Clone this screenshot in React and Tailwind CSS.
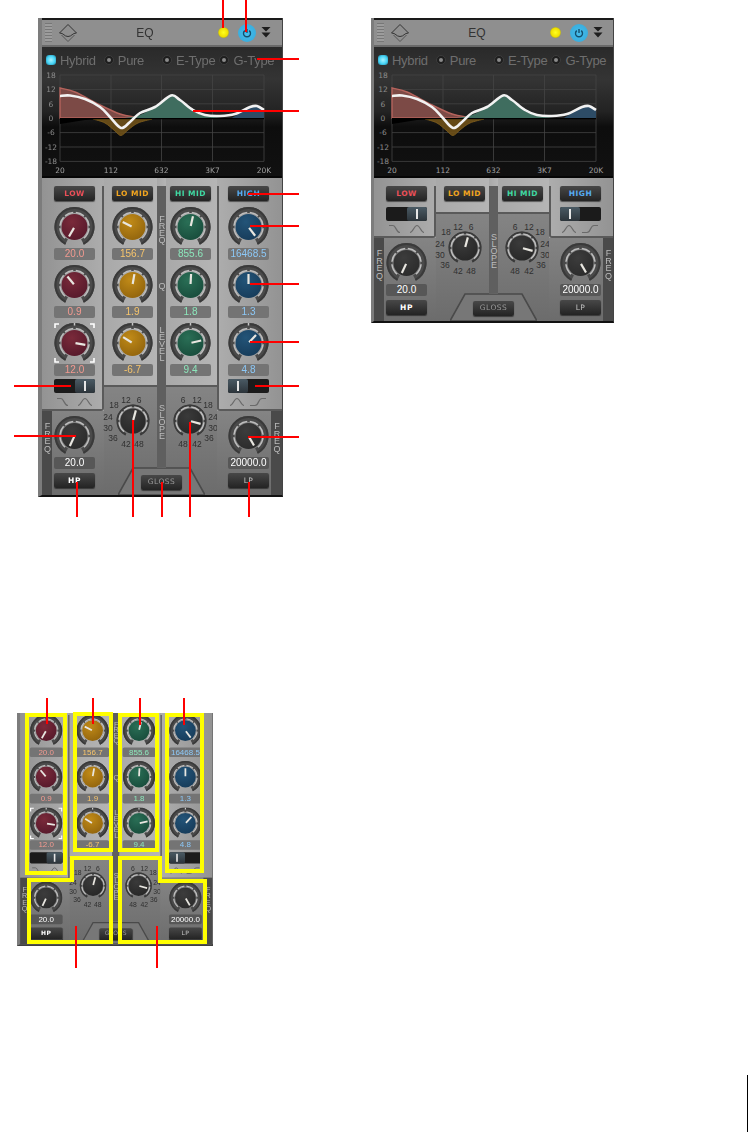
import React, { useId } from "react";

const pts = (list) => {
  let d = `M${list[0][0]} ${list[0][1]}`;
  for (let i = 0; i < list.length - 1; i++) {
    const p0 = list[i - 1] || list[i];
    const p1 = list[i];
    const p2 = list[i + 1];
    const p3 = list[i + 2] || p2;
    const c1 = [p1[0] + (p2[0] - p0[0]) / 6, p1[1] + (p2[1] - p0[1]) / 6];
    const c2 = [p2[0] - (p3[0] - p1[0]) / 6, p2[1] - (p3[1] - p1[1]) / 6];
    d += ` C${c1[0].toFixed(1)} ${c1[1].toFixed(1)} ${c2[0].toFixed(1)} ${c2[1].toFixed(1)} ${p2[0]} ${p2[1]}`;
  }
  return d;
};

const polar = (cx, cy, r, deg) => {
  const a = ((deg - 90) * Math.PI) / 180;
  return [cx + r * Math.cos(a), cy + r * Math.sin(a)];
};
const arc = (cx, cy, r, a, b) => {
  const [x1, y1] = polar(cx, cy, r, a);
  const [x2, y2] = polar(cx, cy, r, b);
  return `M${x1.toFixed(2)} ${y1.toFixed(2)} A${r} ${r} 0 ${b - a > 180 ? 1 : 0} 1 ${x2.toFixed(2)} ${y2.toFixed(2)}`;
};

const RING = [
  [-140, -95],
  [-85, -48],
  [-40, -5],
  [5, 40],
  [48, 85],
  [95, 140],
];

function KnobArt({ cx, cy, outer, band, ringR, capR, cap, capDark, angle, ptrLen, selected, tick }) {
  const id = useId();
  const [x1, y1] = polar(cx, cy, 1, angle);
  const [x2, y2] = polar(cx, cy, ptrLen, angle);
  return (
    <>
      <defs>
        <radialGradient id={id} cx="40%" cy="30%" r="80%">
          <stop offset="0%" stopColor={cap} />
          <stop offset="100%" stopColor={capDark} />
        </radialGradient>
      </defs>
      <path d={arc(cx, cy, outer - band / 2, -152, 152)} fill="none" stroke="#4a4a4a" strokeWidth={band} />
      <path d={arc(cx, cy, outer - 1, -152, 152)} fill="none" stroke="#3a3a3a" strokeWidth="2" />
      {RING.map(([a, b]) => (
        <path key={a} d={arc(cx, cy, ringR, a, b)} fill="none" stroke="#bdbdbd" strokeWidth="1.6" />
      ))}
      <circle cx={cx} cy={cy} r={capR} fill={`url(#${id})`} />
      <line x1={x1} y1={y1} x2={x2} y2={y2} stroke="#e8e6e0" strokeWidth="2.2" />
      {tick && <line x1={cx} y1={0} x2={cx} y2={2.5} stroke="#c8c8c8" strokeWidth="1.5" />}
      {selected && (
        <path
          d="M1 5V1H5M36 1H40V5M40 35V39H36M5 39H1V35"
          fill="none"
          stroke="#ffffff"
          strokeWidth="1.6"
        />
      )}
    </>
  );
}

const CAPS = {
  low: ["#7a2a3a", "#54182a"],
  lomid: ["#c08a18", "#8f620c"],
  himid: ["#2a6f56", "#174a3a"],
  high: ["#235478", "#163a58"],
  dark: ["#3c3c3c", "#2a2a2a"],
};

function Knob({ tone, angle, selected, tick }) {
  const [c, d] = CAPS[tone];
  return (
    <svg width="41" height="40" viewBox="0 0 41 40" className="block">
      <KnobArt
        cx={20.5}
        cy={20}
        outer={20}
        band={6}
        ringR={14.6}
        capR={13}
        cap={c}
        capDark={d}
        angle={angle}
        ptrLen={11}
        selected={selected}
        tick={tick}
      />
    </svg>
  );
}

const LEFT_SCALE = [
  ["12", -7, -21],
  ["6", 6, -21],
  ["18", -19, -16],
  ["24", -25, -4],
  ["30", -25, 7],
  ["36", -20, 17],
  ["42", -7, 23],
  ["48", 6, 23],
];
const RIGHT_SCALE = [
  ["6", -7, -21],
  ["12", 7, -21],
  ["18", 18, -16],
  ["24", 23, -4],
  ["30", 23, 7],
  ["36", 19, 17],
  ["48", -7, 23],
  ["42", 7, 23],
];

function Dial({ scale, angle, className }) {
  return (
    <svg width="60" height="56" viewBox="-30 -28 60 56" className={`block overflow-visible ${className}`}>
      <KnobArt
        cx={0}
        cy={0}
        outer={16.5}
        band={2.5}
        ringR={14}
        capR={12.6}
        cap="#3a3a3a"
        capDark="#262626"
        angle={angle}
        ptrLen={11}
      />
      {scale.map(([t, x, y]) => (
        <text
          key={t}
          x={x}
          y={y + 3}
          textAnchor="middle"
          fontSize="8.5"
          fill="#303030"
          className="font-['Liberation_Sans',sans-serif]"
        >
          {t}
        </text>
      ))}
    </svg>
  );
}

function Value({ children, color = "text-white", dark }) {
  return (
    <div
      className={`w-[41px] h-[12px] rounded-[2px] flex items-center justify-center text-[10px] leading-none ${
        dark ? "bg-[#575757]" : "bg-[#747474]"
      } ${color}`}
    >
      {children}
    </div>
  );
}

function PanelButton({ children, color, thin }) {
  return (
    <div
      className={`w-[41px] h-[15px] rounded-[2px] flex items-center justify-center bg-[linear-gradient(to_bottom,#484848,#232323)] shadow-[0_1px_1px_rgba(0,0,0,0.5)] text-[7.5px] leading-none tracking-[0.5px] font-['DejaVu_Sans',sans-serif] ${thin ? "font-normal" : "font-bold"} ${color}`}
    >
      {children}
    </div>
  );
}

function Switch({ right }) {
  return (
    <div className={`w-[41px] h-[14px] rounded-[2px] bg-[#1b1b1b] flex ${right ? "justify-end" : "justify-start"}`}>
      <div className="w-[20px] h-[14px] rounded-[2px] bg-[linear-gradient(to_bottom,#4a5a64,#2c343a)] flex items-center justify-center">
        <div className="w-[2px] h-[10px] bg-[#e6e6e6]" />
      </div>
    </div>
  );
}

function ShapeIcons({ kind }) {
  return (
    <svg width="41" height="10" viewBox="0 0 41 10" className="block">
      {kind === "low" ? (
        <>
          <path d="M3 1.5H7C10 1.5 10 8.5 14 8.5" fill="none" stroke="#6a6a6a" strokeWidth="1.2" />
          <path d="M24 8.5C27 8.5 28 1.5 31 1.5C34 1.5 35 8.5 38 8.5" fill="none" stroke="#6a6a6a" strokeWidth="1.2" />
        </>
      ) : (
        <>
          <path d="M2 8.5C5 8.5 6 1.5 9 1.5C12 1.5 13 8.5 16 8.5" fill="none" stroke="#6a6a6a" strokeWidth="1.2" />
          <path d="M22 8.5H27C31 8.5 30 1.5 34 1.5H38" fill="none" stroke="#6a6a6a" strokeWidth="1.2" />
        </>
      )}
    </svg>
  );
}

function Letters({ text, className = "", tracking = "tracking-[-3px]" }) {
  return (
    <div
      className={`[writing-mode:vertical-rl] [text-orientation:upright] text-[9px] leading-none text-[#bcbcbc] ${tracking} ${className}`}
    >
      {text}
    </div>
  );
}

const BANDS = {
  low: {
    name: "LOW",
    btn: "text-[#ec4f58]",
    val: "text-[#f39a90]",
    values: ["20.0", "0.9", "12.0"],
    angles: [210, -40, 100],
    tone: "low",
  },
  lomid: {
    name: "LO MID",
    btn: "text-[#f2a51e]",
    val: "text-[#f7c56c]",
    values: ["156.7", "1.9", "-6.7"],
    angles: [-63, 10, -58],
    tone: "lomid",
  },
  himid: {
    name: "HI MID",
    btn: "text-[#3fd9a2]",
    val: "text-[#8ce6bb]",
    values: ["855.6", "1.8", "9.4"],
    angles: [13, 3, 77],
    tone: "himid",
  },
  high: {
    name: "HIGH",
    btn: "text-[#55abf2]",
    val: "text-[#8cc8f7]",
    values: ["16468.5", "1.3", "4.8"],
    angles: [143, 0, 43],
    tone: "high",
  },
};

function KnobStack({ band }) {
  const b = BANDS[band];
  return (
    <>
      <Knob tone={b.tone} angle={b.angles[0]} />
      <div className="mt-px">
        <Value color={b.val}>{b.values[0]}</Value>
      </div>
      <div className="mt-[5px]">
        <Knob tone={b.tone} angle={b.angles[1]} />
      </div>
      <div className="mt-px">
        <Value color={b.val}>{b.values[1]}</Value>
      </div>
      <div className="mt-[5px]">
        <Knob tone={b.tone} angle={b.angles[2]} selected={band === "low"} tick />
      </div>
      <div className="mt-px">
        <Value color={b.val}>{b.values[2]}</Value>
      </div>
    </>
  );
}

function BandBody({ band, mode }) {
  const b = BANDS[band];
  const buttons = mode !== "knobs";
  const knobs = mode !== "compact";
  return (
    <>
      {buttons && <PanelButton color={b.btn}>{b.name}</PanelButton>}
      {knobs && (
        <div className={buttons ? "mt-[6px]" : "mt-[2px]"}>
          <KnobStack band={band} />
        </div>
      )}
    </>
  );
}

function Header() {
  return (
    <div className="h-[29px] flex items-center bg-[#8f8f8f] border-t-2 border-t-[#1a1a1a] border-b-2 border-b-[#6a6a6a] shrink-0">
      <div className="ml-[3px] w-[7px] h-[19px] bg-[repeating-linear-gradient(to_bottom,#777777_0,#777777_1px,#9c9c9c_1px,#9c9c9c_3px)]" />
      <svg width="18" height="18" viewBox="0 0 18 18" className="ml-[7px]">
        <path d="M0.5 9L9 0.5L17.5 9" fill="none" stroke="#333333" strokeWidth="1" />
        <path d="M0.5 9C5 9 5 12.5 9 12.5C13 12.5 13 9 17.5 9" fill="none" stroke="#333333" strokeWidth="1" />
        <path d="M2.5 11L9 17.5L15.5 11" fill="none" stroke="#555555" strokeWidth="1" />
      </svg>
      <div className="ml-[59px] w-[18px] text-[12px] leading-none text-[#333333] text-center">EQ</div>
      <div className="ml-[64px] w-[11px] h-[11px] rounded-full bg-[radial-gradient(circle,#ffff20_0,#f0e000_55%,#8a8a50_80%,#b0b0a0_100%)]" />
      <div className="ml-[9px] w-[18px] h-[18px] rounded-full bg-[radial-gradient(circle,#45bdec_0,#3aaede_70%,#6b7f88_90%)] flex items-center justify-center">
        <svg width="10" height="10" viewBox="0 0 10 10">
          <path d="M2.8 2.6A3.5 3.5 0 1 0 7.2 2.6" fill="none" stroke="#14506e" strokeWidth="1.4" />
          <line x1="5" y1="1" x2="5" y2="5" stroke="#14506e" strokeWidth="1.4" />
        </svg>
      </div>
      <svg width="10" height="11" viewBox="0 0 10 11" className="ml-[5px]">
        <path d="M0.5 0H9.5L5 4.5Z M0.5 5.5H9.5L5 10.5Z" fill="#1e1e1e" />
      </svg>
    </div>
  );
}

function Radio({ on, label, className = "" }) {
  return (
    <div className={`flex items-center ${className}`}>
      {on ? (
        <div className="w-[10px] h-[10px] rounded-[3px] bg-[radial-gradient(circle,#a8f2ff_0,#46d4f6_55%,#1f6f88_100%)]" />
      ) : (
        <div className="w-[10px] h-[10px] rounded-full bg-[#1e1e1e] border border-[#3c3c3c] flex items-center justify-center">
          <div className="w-[4px] h-[4px] rounded-full bg-[#8a8a8a]" />
        </div>
      )}
      <span className="ml-[4px] text-[13px] leading-none tracking-[-0.3px] text-[#6e6e6e]">{label}</span>
    </div>
  );
}

const WHITE = [
  [60, 96],
  [70, 95.5],
  [85, 99],
  [100, 107],
  [110, 117],
  [121, 128],
  [130, 122],
  [140, 113],
  [155, 107],
  [171, 95.5],
  [180, 100],
  [193, 110],
  [205, 115],
  [220, 116],
  [235, 114],
  [250, 107],
  [257, 106],
  [264, 110],
];
const RED = [
  [60, 88],
  [75, 92],
  [100, 105],
  [120, 114],
  [135, 117],
  [150, 118],
];
const GREEN = [
  [125, 118],
  [140, 115],
  [155, 107],
  [171, 96],
  [180, 100],
  [193, 111],
  [205, 115.5],
  [220, 118],
];
const BLUE = [
  [232, 118],
  [245, 110],
  [257, 106],
  [264, 110],
];
const ORANGE = [
  [93, 119],
  [105, 123],
  [115, 131],
  [121, 135.5],
  [128, 130],
  [138, 123],
  [152, 119],
];

function Display() {
  const ys = [
    ["18", 75],
    ["12", 89.4],
    ["6", 103.8],
    ["0", 118.2],
    ["-6", 132.6],
    ["-12", 147],
    ["-18", 161.4],
  ];
  const xs = [
    ["20", 60],
    ["112", 111],
    ["632", 161.5],
    ["3K7", 212.5],
    ["20K", 264],
  ];
  const tick = "font-['DejaVu_Sans',sans-serif]";
  return (
    <div className="h-[131px] shrink-0 bg-[linear-gradient(to_bottom,#2a2a2a_0%,#343434_25%,#232323_50%,#0d0d0d_62%,#111111_100%)] border-b-2 border-b-[#060606]">
      <div className="pt-[6px] pl-[4px] h-[20px] flex items-center">
        <Radio on label="Hybrid" />
        <Radio label="Pure" className="ml-[8px]" />
        <Radio label="E-Type" className="ml-[18px]" />
        <Radio label="G-Type" className="ml-[4px]" />
      </div>
      <svg width="240" height="109" viewBox="42 67 240 109" className="block">
        {ys.map(([t, y]) => (
          <g key={t}>
            <line x1="60" x2="264" y1={y} y2={y} stroke="#444444" strokeWidth="0.8" />
            <text x="51" y={y + 2.8} textAnchor="middle" fontSize="7.5" fill="#8c8c8c" className={tick}>
              {t}
            </text>
          </g>
        ))}
        {xs.map(([t, x]) => (
          <g key={t}>
            <line x1={x} x2={x} y1="75" y2="161.4" stroke="#444444" strokeWidth="0.8" />
            <text x={x} y="173" textAnchor="middle" fontSize="7.5" fill="#a0a0a0" className={tick}>
              {t}
            </text>
          </g>
        ))}
        <path d={`${pts(ORANGE)} Z`} fill="#6e5018" opacity="0.9" stroke="#8f6a20" strokeWidth="0.8" />
        <path d={`${pts(RED)} L60 118 Z`} fill="#7c4a46" stroke="#b5635c" strokeWidth="1.4" />
        <path d={`${pts(GREEN)} Z`} fill="#3f6d5f" />
        <path d={`${pts(BLUE)} L264 118 Z`} fill="#2d4c66" />
        <path d="M60 124L85 120L110 118L60 118Z" fill="#000000" />
        <path d="M60 118H264V119.2H60Z" fill="#000000" />
        <path d={pts(WHITE)} fill="none" stroke="#f2f2f2" strokeWidth="2.6" />
      </svg>
    </div>
  );
}

function Controls({ mode }) {
  const sideUpper = mode === "full" ? "h-[233px]" : mode === "compact" ? "h-[60px]" : "h-[206px]";
  const midUpper = mode === "full" ? "h-[209px]" : mode === "compact" ? "h-[36px]" : "h-[182px]";
  const topPad = mode === "knobs" ? "" : "pt-[8px]";
  const lightL = "bg-[linear-gradient(to_right,#939393,#adadad)]";
  const lightM = "bg-[linear-gradient(to_right,#a9a9a9,#b5b5b5)]";
  const lightR = "bg-[linear-gradient(to_right,#adadad,#939393)]";
  const lowerBg = "bg-[linear-gradient(to_bottom,#848484,#6c6c6c)]";
  const switchGap = mode === "compact" ? "mt-[6px]" : "mt-[3px]";
  const iconGap = mode === "compact" ? "mt-[3px]" : "mt-[4px]";

  return (
    <div className="relative flex flex-1 bg-[#777777]">
      <div className="w-[62px] flex flex-col">
        <div className={`${sideUpper} ${lightL} ${topPad}`}>
          <div className="h-full border-r-2 border-b-2 border-[#5a5a5a] rounded-br-[3px] pl-[12px]">
            <BandBody band="low" mode={mode} />
            <div className={switchGap}>
              <Switch right />
            </div>
            <div className={iconGap}>
              <ShapeIcons kind="low" />
            </div>
          </div>
        </div>
        <div className={`flex flex-1 ${lowerBg}`}>
          <div className="w-[10px] bg-[#4a4a4a] flex justify-center">
            <Letters text="FREQ" className="mt-[10px]" tracking="tracking-[-2.3px]" />
          </div>
          <div className="pl-[2px] pt-[5px]">
            <Knob tone="dark" angle={205} />
            <div className="mt-[1px]">
              <Value dark color="text-white">20.0</Value>
            </div>
            <div className="mt-[4px]">
              <PanelButton color="text-white">HP</PanelButton>
            </div>
          </div>
        </div>
      </div>

      <div className="w-[53px] flex flex-col">
        <div className={`${midUpper} ${lightM} border-b-2 border-[#5a5a5a] pl-[8px] ${topPad}`}>
          <BandBody band="lomid" mode={mode} />
        </div>
        <div className={`flex-1 ${lowerBg} pt-[6px]`}>
          <Dial scale={LEFT_SCALE} angle={15} className="-ml-px" />
        </div>
      </div>

      <div className={`w-[9px] flex flex-col items-center ${lightM}`}>
        <div className={`flex-1 mb-[28px] w-full bg-[#5f5f5f] flex flex-col items-center ${mode === "knobs" ? "" : "mt-[8px]"}`}>
          {mode !== "compact" && (
            <>
              <Letters text="FREQ" className={mode === "knobs" ? "mt-[9px]" : "mt-[28px]"} />
              <Letters text="Q" className="mt-[39px]" />
              <Letters text="LEVEL" className="mt-[37px]" />
            </>
          )}
          <Letters text="SLOPE" className={mode === "compact" ? "mt-[46px]" : "mt-[43px]"} />
        </div>
      </div>

      <div className="w-[51px] flex flex-col">
        <div className={`${midUpper} ${lightM} border-b-2 border-[#5a5a5a] pl-[4px] ${topPad}`}>
          <BandBody band="himid" mode={mode} />
        </div>
        <div className={`flex-1 ${lowerBg} pt-[6px]`}>
          <Dial scale={RIGHT_SCALE} angle={105} className="-ml-[6px]" />
        </div>
      </div>

      <div className="flex-1 flex flex-col">
        <div className={`${sideUpper} ${lightR} ${topPad}`}>
          <div className="h-full border-l-2 border-b-2 border-[#5a5a5a] rounded-bl-[3px] pl-[9px]">
            <BandBody band="high" mode={mode} />
            <div className={switchGap}>
              <Switch />
            </div>
            <div className={iconGap}>
              <ShapeIcons kind="high" />
            </div>
          </div>
        </div>
        <div className={`flex flex-1 ${lowerBg}`}>
          <div className="pl-[11px] pt-[5px] w-[54px] shrink-0">
            <Knob tone="dark" angle={150} />
            <div className="mt-[1px]">
              <Value dark color="text-white">20000.0</Value>
            </div>
            <div className="mt-[4px]">
              <PanelButton thin color="text-[#c4c4c4]">LP</PanelButton>
            </div>
          </div>
          <div className="flex-1 bg-[#4a4a4a] flex justify-center">
            <Letters text="FREQ" className="mt-[10px]" tracking="tracking-[-2.3px]" />
          </div>
        </div>
      </div>

      <div className="absolute left-[76px] bottom-0 w-[87px] h-[28px] flex items-center justify-center">
        <svg width="87" height="28" viewBox="0 0 87 28" className="absolute inset-0">
          <path d="M0 28L15 1H72L87 28Z" fill="#777777" stroke="#4a4a4a" strokeWidth="1.6" />
        </svg>
        <div className="relative mt-[2px]">
          <PanelButton thin color="text-[#9a9a9a]">GLOSS</PanelButton>
        </div>
      </div>
    </div>
  );
}

function Panel({ mode = "full", narrow, height }) {
  const hasHead = mode !== "knobs";
  return (
    <div
      className={`${height} ${narrow ? "w-[243px] border-l-[3px]" : "w-[245px] border-l-4"} shrink-0 flex flex-col blur-[0.35px] border-[#7c7c7c] border-r border-r-[#444444] border-b-2 border-b-[#111111] font-['Liberation_Sans',sans-serif]`}
    >
      {hasHead && <Header />}
      {hasHead && <Display />}
      <Controls mode={mode} />
    </div>
  );
}

function Marks() {
  const red = [
    [223, 0, 223, 28],
    [246, 0, 246, 32],
    [257, 59, 299, 59],
    [193, 111, 299, 111],
    [248, 194, 299, 194],
    [250, 226, 299, 226],
    [250, 284, 299, 284],
    [250, 342, 299, 342],
    [14, 386, 71, 386],
    [255, 386, 299, 386],
    [14, 436, 76, 436],
    [248, 437, 299, 437],
    [77, 482, 77, 517],
    [133, 420, 133, 517],
    [162, 482, 162, 517],
    [190, 422, 190, 517],
    [249, 482, 249, 517],
    [47, 698, 47, 724],
    [93, 698, 93, 724],
    [140, 698, 140, 725],
    [184, 698, 184, 725],
    [76, 926, 76, 968],
    [157, 926, 157, 968],
  ];
  return (
    <svg width="748" height="1132" viewBox="0 0 748 1132" className="absolute inset-0 pointer-events-none">
      <g fill="none" stroke="#ffff00" strokeWidth="4">
        <rect x="27" y="715" width="38" height="158" />
        <rect x="75" y="714" width="36" height="136" />
        <rect x="120" y="715" width="37" height="135" />
        <rect x="167" y="715" width="35" height="156" />
        <path d="M29 880H72V858H111V942H29Z" />
        <path d="M120 858H160V881H205V942H120Z" />
      </g>
      {red.map(([x1, y1, x2, y2], i) => (
        <line key={i} x1={x1} y1={y1} x2={x2} y2={y2} stroke="#ff0000" strokeWidth="2" />
      ))}
    </svg>
  );
}

export default function App() {
  return (
    <div className="relative w-[748px] h-[1132px] bg-white overflow-hidden flex flex-col">
      <div className="flex items-start pt-[18px] pl-[38px]">
        <Panel mode="full" height="h-[479px]" />
        <div className="ml-[88px]">
          <Panel mode="compact" narrow height="h-[305px]" />
        </div>
      </div>
      <div className="ml-[17px] mt-[216px] w-[196px] h-[233px]">
        <div className="origin-top-left scale-[0.8]">
          <Panel mode="knobs" height="h-[291px]" />
        </div>
      </div>
      <div className="mt-auto self-end w-px h-[57px] bg-black" />
      <Marks />
    </div>
  );
}
